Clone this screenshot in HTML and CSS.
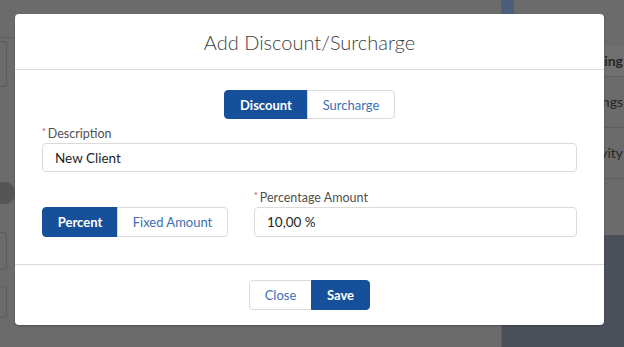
FILE: index.html
```html
<!DOCTYPE html>
<html lang="en">
<head>
  <meta charset="UTF-8">
  <meta name="viewport" content="width=device-width, initial-scale=1.0">
  <title>Add Discount/Surcharge</title>
  <link rel="stylesheet" href="styles.css">
</head>
<body>
  <div class="page">
    <div class="main">
      <div class="top-rule"></div>
      <div class="ghost-box ghost-a"></div>
      <div class="ghost-pill"></div>
      <div class="ghost-box ghost-b"></div>
      <div class="ghost-box ghost-c"></div>
    </div>
    <div class="side">
      <div class="side-tab"></div>
      <div class="side-row side-head">Pricing</div>
      <div class="side-row">Settings</div>
      <div class="side-row">Activity</div>
      <div class="side-dark"></div>
    </div>
  </div>

  <div class="modal">
    <div class="modal-header">
      <h2>Add Discount/Surcharge</h2>
    </div>

    <div class="modal-body">
      <div class="toggle-row">
        <div class="btn-group">
          <button class="btn btn-brand">Discount</button>
          <button class="btn btn-neutral">Surcharge</button>
        </div>
      </div>

      <div class="field">
        <label class="field-label"><abbr>*</abbr>Description</label>
        <input class="field-input" type="text" value="New Client">
      </div>

      <div class="field-row">
        <div class="btn-group type-group">
          <button class="btn btn-brand">Percent</button>
          <button class="btn btn-neutral">Fixed Amount</button>
        </div>
        <div class="field">
          <label class="field-label"><abbr>*</abbr>Percentage Amount</label>
          <input class="field-input" type="text" value="10,00 %">
        </div>
      </div>
    </div>

    <div class="modal-footer">
      <div class="btn-group">
        <button class="btn btn-neutral">Close</button>
        <button class="btn btn-brand">Save</button>
      </div>
    </div>
  </div>
</body>
</html>
```

FILE: styles.css
```css
body {
  margin: 0;
  width: 624px;
  height: 347px;
  overflow: hidden;
  background-color: #6b6b6b;
  font-family: 'Lato', 'Liberation Sans', sans-serif;
  color: #3e3e3c;
}
.page {
  display: flex;
  height: 347px;
}
.main {
  width: 501px;
  border-right: 1px solid #5e5e5e;
}
.top-rule {
  height: 37px;
  border-bottom: 1px solid #5f5f5f;
}
.ghost-box {
  width: 6px;
  border: 1px solid #5c5c5c;
  border-left: none;
  border-radius: 0 4px 4px 0;
}
.ghost-a {
  height: 44px;
  margin-top: 3px;
}
.ghost-pill {
  width: 15px;
  height: 22px;
  margin-top: 95px;
  margin-bottom: 28px;
  background-color: #555555;
  border-radius: 0 10px 10px 0;
}
.ghost-b {
  height: 36px;
  margin-bottom: 16px;
}
.ghost-c {
  height: 30px;
}
.side {
  flex: 1;
  display: flex;
  flex-direction: column;
}
.side-tab {
  width: 12px;
  height: 14px;
  background-color: #4d5e7a;
}
.side-row {
  height: 50px;
  border-bottom: 1px solid #5f5f5f;
  font-size: 14px;
  color: #262626;
  text-align: right;
  line-height: 50px;
  padding-right: 1px;
}
.side-head {
  margin-top: 32px;
  height: 30px;
  line-height: 30px;
  background-color: #707070;
  font-weight: 700;
}
.side-dark {
  flex: 1;
  margin-top: 56px;
  background-color: #4a4f5a;
}

/* modal */
.modal {
  position: absolute;
  left: 15px;
  top: 14px;
  width: 589px;
  height: 311px;
  background-color: #ffffff;
  border-radius: 4px;
  box-shadow: 0 1px 2px rgba(0, 0, 0, 0.25);
  display: flex;
  flex-direction: column;
}
.modal-header {
  height: 55px;
  border-bottom: 1px solid #dddbda;
  display: flex;
  align-items: center;
  justify-content: center;
}
.modal-header h2 {
  margin: 0;
  font-size: 20px;
  font-weight: 300;
  color: #3e3e3c;
}
.modal-body {
  flex: 1;
  padding: 20px 27px 0;
}
.toggle-row {
  display: flex;
  justify-content: center;
  margin-bottom: 5px;
}
.btn-group {
  display: inline-flex;
}
.btn {
  font-family: inherit;
  font-size: 13px;
  height: 30px;
  padding: 0;
  white-space: nowrap;
  border: 1px solid #dddbda;
  background-color: #ffffff;
  cursor: pointer;
}
.btn-group .btn:first-child {
  border-radius: 4px 0 0 4px;
}
.btn-group .btn:last-child {
  border-radius: 0 4px 4px 0;
  margin-left: -1px;
}
.btn-brand {
  background-color: #17509a;
  border-color: #17509a;
  color: #ffffff;
  font-weight: 700;
}
.btn-neutral {
  color: #3d6fb3;
}
.toggle-row .btn {
  height: 29px;
}
.toggle-row .btn-brand {
  width: 84px;
}
.toggle-row .btn-neutral {
  width: 88px;
}
.field-label {
  display: block;
  font-size: 12.5px;
  color: #4f4f4f;
  line-height: 16px;
  height: 16px;
  margin-bottom: 3px;
}
.field-label abbr {
  color: #c23934;
  font-size: 9px;
  margin-right: 2px;
  vertical-align: 3px;
}
.field-input {
  box-sizing: border-box;
  display: block;
  width: 100%;
  height: 29px;
  margin: 0;
  border: 1px solid #dddbda;
  border-radius: 4px;
  padding: 0 12px;
  font-family: inherit;
  font-size: 13.5px;
  color: #1e1e1e;
}
.field-row {
  display: grid;
  grid-template-columns: 186px 1fr;
  column-gap: 26px;
  align-items: end;
  margin-top: 16px;
}
.field-row .field-input {
  height: 30px;
}
.type-group .btn-brand {
  width: 76px;
}
.type-group .btn-neutral {
  width: 111px;
}
.modal-footer {
  height: 60px;
  border-top: 1px solid #dddbda;
  display: flex;
  align-items: center;
  justify-content: center;
}
.modal-footer .btn-neutral {
  width: 63px;
}
.modal-footer .btn-brand {
  width: 59px;
}
```
